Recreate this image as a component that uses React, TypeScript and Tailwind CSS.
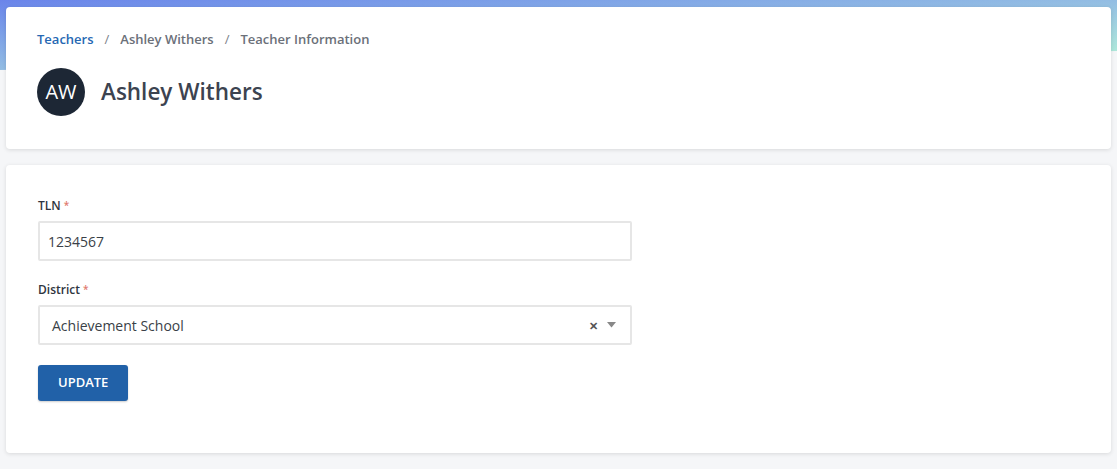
import React from 'react';

const Breadcrumb = () => (
  <nav className="flex items-center gap-[11px] text-[13px] leading-none font-semibold">
    <a className="text-[#2668b3]">Teachers</a>
    <span className="text-[#7b8089] font-normal">/</span>
    <span className="text-[#6b7079]">Ashley Withers</span>
    <span className="text-[#7b8089] font-normal">/</span>
    <span className="text-[#6b7079]">Teacher Information</span>
  </nav>
);

const Label = ({ children }: { children: React.ReactNode }) => (
  <label className="block text-[12px] font-semibold text-[#2f3540] leading-none mb-[9px]">
    {children} <span className="text-[10px] text-[#e07a6e] align-top">*</span>
  </label>
);

export default function App() {
  return (
    <div className="relative min-h-[469px] bg-[#f5f6f8] px-[6px] pt-[7px] pb-[17px]" style={{ fontFamily: '"Open Sans", Lato, sans-serif' }}>
      <div className="absolute inset-x-0 top-0 h-[70px] bg-gradient-to-br from-[#6a84ea] via-[#93bde3] to-[#b9f7d6] [clip-path:polygon(0_0,100%_0,100%_73%,0_100%)]" />

      <div className="relative flex flex-col gap-4">
        <section className="bg-white rounded-[4px] shadow-[0_1px_4px_rgba(0,0,0,0.12)] pl-[31px] pt-[26px] pb-[33px]">
          <Breadcrumb />
          <div className="flex items-center gap-4 mt-[22px]">
            <div className="w-12 h-12 rounded-full bg-[#1d2735] text-white flex items-center justify-center text-[20px] leading-none">
              AW
            </div>
            <h1 className="text-[22.5px] font-semibold text-[#3c4350] leading-none">Ashley Withers</h1>
          </div>
        </section>

        <section className="bg-white rounded-[4px] shadow-[0_1px_4px_rgba(0,0,0,0.12)] pl-8 pt-[35px] pb-[52px]">
          <div className="w-[594px] flex flex-col">
            <Label>TLN</Label>
            <input
              defaultValue="1234567"
              className="h-10 border-2 border-[#e6e6e6] rounded-[2px] px-2 text-[14px] text-[#3a3f47] outline-none"
            />

            <div className="mt-[23px]">
              <Label>District</Label>
            </div>
            <div className="h-10 border-2 border-[#e6e6e6] rounded-[2px] pl-3 pr-[14px] flex items-center text-[14px] text-[#3a3f47]">
              <span className="flex-1">Achievement School</span>
              <span className="text-[11px] text-[#555] font-bold mr-[9px] leading-none">✕</span>
              <svg width="9" height="6" viewBox="0 0 9 6" className="text-[#888]">
                <path d="M0 0h9L4.5 5.5z" fill="currentColor" />
              </svg>
            </div>

            <div className="mt-5">
              <button className="h-9 px-5 bg-[#2161a8] text-white text-[13px] font-semibold rounded-[3px] shadow-[0_1px_2px_rgba(0,0,0,0.2)]">
                UPDATE
              </button>
            </div>
          </div>
        </section>
      </div>
    </div>
  );
}
